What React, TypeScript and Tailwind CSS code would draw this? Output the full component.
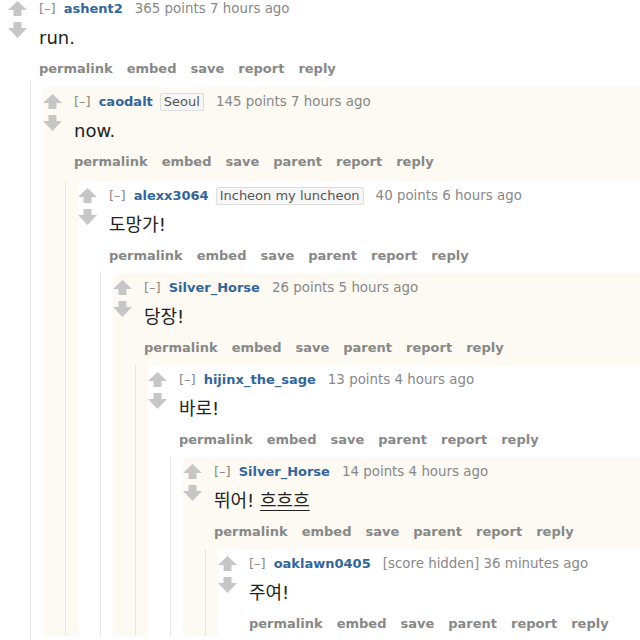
import React from "react";

type Item = {
  user: string;
  flair?: string;
  meta: string;
  body: React.ReactNode;
};

const thread: Item[] = [
  { user: "ashent2", meta: "365 points 7 hours ago", body: "run." },
  { user: "caodalt", flair: "Seoul", meta: "145 points 7 hours ago", body: "now." },
  { user: "alexx3064", flair: "Incheon my luncheon", meta: "40 points 6 hours ago", body: "도망가!" },
  { user: "Silver_Horse", meta: "26 points 5 hours ago", body: "당장!" },
  { user: "hijinx_the_sage", meta: "13 points 4 hours ago", body: "바로!" },
  {
    user: "Silver_Horse",
    meta: "14 points 4 hours ago",
    body: (
      <>
        뛰어! <span className="underline underline-offset-[3px]">흐흐흐</span>
      </>
    ),
  },
  { user: "oaklawn0405", meta: "[score hidden] 36 minutes ago", body: "주여!" },
];

// spacing above each nested reply (the screenshot isn't perfectly even)
const childGap = ["mt-[9px]", "mt-[10px]", "mt-[8px]", "mt-[8px]", "mt-[8px]", "mt-[8px]"];

function UpArrow() {
  return (
    <svg width="19" height="15" viewBox="0 0 19 15">
      <path d="M9.5 0 L19 9 H13.5 V15 H5.5 V9 H0 Z" fill="#c6c6c6" />
    </svg>
  );
}

function DownArrow() {
  return (
    <svg width="19" height="16" viewBox="0 0 19 16">
      <path d="M5.5 0 H13.5 V6 H19 L9.5 16 L0 6 H5.5 Z" fill="#c6c6c6" />
    </svg>
  );
}

function Comment({ depth }: { depth: number }) {
  const c = thread[depth];
  const last = depth === thread.length - 1;
  const actions =
    depth === 0
      ? ["permalink", "embed", "save", "report", "reply"]
      : ["permalink", "embed", "save", "parent", "report", "reply"];

  return (
    <div className={depth % 2 === 1 ? "bg-[#fcfaf2] pt-[6px]" : "bg-white pt-[6px]"}>
      <div className={last ? "flex pb-[3px]" : "flex"}>
        {/* vote arrows */}
        <div className="w-[19px] mr-[12px] flex flex-col shrink-0 pt-[1px]">
          <UpArrow />
          <div className="mt-[6px]">
            <DownArrow />
          </div>
        </div>

        <div className="flex flex-col">
          <div className="flex items-center h-[18px] text-[13px] whitespace-nowrap">
            <span className="text-[#888]">[–]</span>
            <span className="ml-[8px] font-bold text-[#369]">{c.user}</span>
            {c.flair && (
              <span className="ml-[7px] h-[18px] leading-[16px] px-[3px] border border-[#ddd] bg-[#f7f7f7] text-[#555] rounded-[2px]">
                {c.flair}
              </span>
            )}
            <span className="ml-[12px] text-[13.4px] text-[#888]">{c.meta}</span>
          </div>

          <div className="mt-[7px] h-[26px] leading-[26px] text-[18px] text-[#222] whitespace-nowrap">
            {c.body}
          </div>

          <div className="mt-[9px] h-[18px] leading-[18px] flex gap-[14px] text-[13px] font-bold text-[#888]">
            {actions.map((a) => (
              <span key={a}>{a}</span>
            ))}
          </div>
        </div>
      </div>

      {!last && (
        <div className={childGap[depth] + " ml-[22px] border-l border-[#e6e6e6] pl-[12px]"}>
          <Comment depth={depth + 1} />
        </div>
      )}
    </div>
  );
}

export default function App() {
  return (
    <div
      className="w-[640px] h-[640px] overflow-hidden bg-white"
      style={{ fontFamily: '"DejaVu Sans", "Noto Sans CJK KR", sans-serif' }}
    >
      <div className="ml-[8px] -mt-[6px]">
        <div className="relative">
          <Comment depth={0} />
          {/* level-0 reply rule keeps running below the thread */}
          <div className="absolute left-[22px] top-[87px] h-[600px] border-l border-[#e6e6e6] pointer-events-none" />
        </div>
      </div>
    </div>
  );
}
